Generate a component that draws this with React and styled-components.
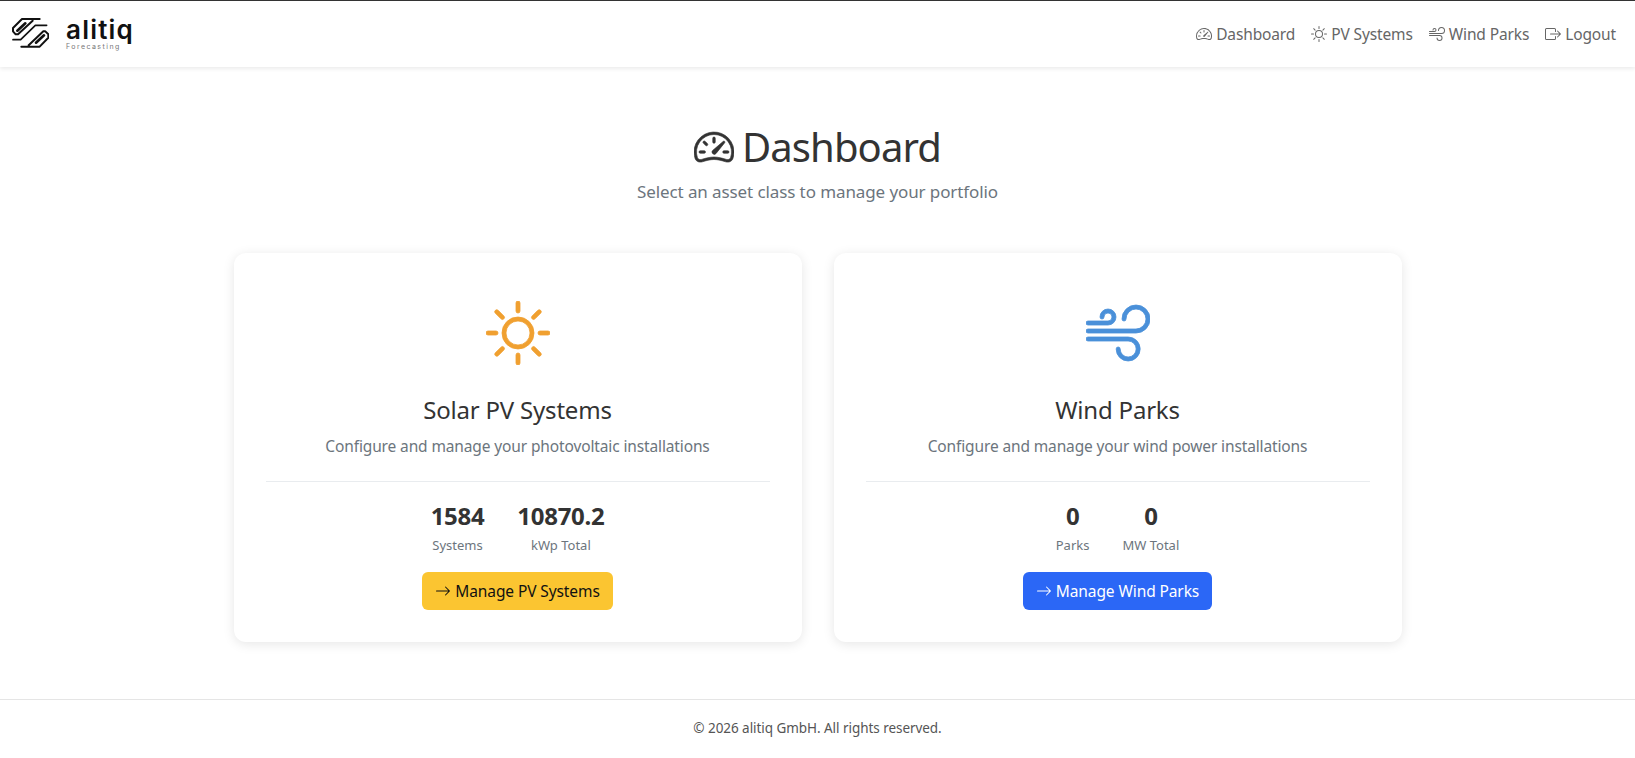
import React from "react";
import styled, { createGlobalStyle } from "styled-components";
import {
  BsSpeedometer2,
  BsSun,
  BsWind,
  BsBoxArrowRight,
  BsArrowRight,
} from "react-icons/bs";

const GlobalStyle = createGlobalStyle`
  * { box-sizing: border-box; }
  html, body { margin: 0; padding: 0; background: #fff; }
  body {
    font-family: "Noto Sans", "Open Sans", sans-serif;
    color: #333;
  }
`;

const Page = styled.div`
  min-height: 758px;
  display: flex;
  flex-direction: column;
  overflow: hidden;
`;

const Navbar = styled.nav`
  height: 67px;
  border-top: 1px solid #333;
  background: #fff;
  box-shadow: 0 2px 4px rgba(0, 0, 0, 0.08);
  display: flex;
  align-items: center;
  justify-content: space-between;
  padding: 0 19px 0 12px;
`;

const Brand = styled.div`
  display: flex;
  align-items: center;
  gap: 17px;
`;

const LogoMark = styled.svg`
  width: 37px;
  height: 30px;
  margin-bottom: 3px;
`;

const BrandText = styled.div`
  display: flex;
  flex-direction: column;
`;

const BrandName = styled.span`
  font-family: "Inter", sans-serif;
  font-weight: 600;
  font-size: 26px;
  line-height: 26px;
  letter-spacing: 1.2px;
  color: #111;
`;

const BrandSub = styled.span`
  font-family: "Inter", sans-serif;
  font-size: 7px;
  line-height: 8px;
  letter-spacing: 1.45px;
  color: #777;
`;

const NavLinks = styled.div`
  display: flex;
  align-items: center;
  gap: 16px;
`;

const NavLink = styled.a`
  display: flex;
  align-items: center;
  gap: 4px;
  font-size: 15.5px;
  letter-spacing: -0.13px;
  color: #666;
  text-decoration: none;
`;

const Main = styled.main`
  flex: 1;
  display: flex;
  flex-direction: column;
  align-items: center;
  padding-top: 56px;
`;

const Title = styled.h1`
  margin: 0;
  display: flex;
  align-items: center;
  gap: 8px;
  font-size: 40px;
  font-weight: 400;
  line-height: 48px;
  letter-spacing: -0.9px;
  color: #333;

  svg {
    stroke: currentColor;
    stroke-width: 0.25;
  }
`;

const Subtitle = styled.p`
  margin: 8px 0 0;
  font-size: 17px;
  line-height: 26px;
  letter-spacing: -0.1px;
  color: #6c757d;
`;

const CardRow = styled.div`
  margin-top: 48px;
  display: grid;
  grid-template-columns: 568px 568px;
  gap: 32px;
`;

const Card = styled.section`
  background: #fff;
  border-radius: 12px;
  box-shadow: 0 2px 12px rgba(0, 0, 0, 0.1);
  padding: 32px;
  display: flex;
  flex-direction: column;
  align-items: center;
  text-align: center;
`;

const CardIcon = styled.div`
  font-size: 64px;
  line-height: 0;
  margin-top: 16px;
  color: ${(p) => p.$color};

  svg {
    stroke: currentColor;
    stroke-width: 0.2;
  }
`;

const CardTitle = styled.h2`
  margin: 30px 0 0;
  font-size: 24px;
  font-weight: 400;
  line-height: 29px;
  letter-spacing: -0.2px;
  color: #333;
`;

const CardText = styled.p`
  margin: 10px 0 0;
  font-size: 15.5px;
  line-height: 24px;
  letter-spacing: -0.13px;
  color: #6c757d;
`;

const Divider = styled.hr`
  width: 100%;
  margin: 23px 0 0;
  border: 0;
  border-top: 1px solid #e9ecef;
`;

const Stats = styled.div`
  margin-top: 19px;
  display: flex;
  justify-content: center;
  gap: 33px;
`;

const Stat = styled.div`
  display: flex;
  flex-direction: column;
  align-items: center;
`;

const StatValue = styled.span`
  font-size: 24px;
  font-weight: 700;
  line-height: 29px;
  letter-spacing: -0.3px;
  color: #333;
`;

const StatLabel = styled.span`
  margin-top: 5px;
  font-size: 13px;
  line-height: 20px;
  color: #6c757d;
`;

const ManageButton = styled.a`
  margin-top: 17px;
  display: inline-flex;
  align-items: center;
  gap: 4px;
  height: 38px;
  padding: 0 13px;
  border-radius: 6px;
  font-size: 15.5px;
  letter-spacing: -0.1px;
  text-decoration: none;
  color: ${(p) => p.$text};
  background: ${(p) => p.$bg};
`;

const Footer = styled.footer`
  height: 59px;
  border-top: 1px solid #e5e5e5;
  display: flex;
  justify-content: center;
  padding-top: 18px;
  font-size: 13.5px;
  line-height: 20px;
  letter-spacing: -0.05px;
  color: #555;
`;

const Logo = () => (
  <LogoMark
    viewBox="22 28 111 90"
    fill="none"
    stroke="#111"
    strokeWidth="6"
    strokeLinecap="round"
    strokeLinejoin="round"
  >
    <path d="M105 31 H52 L25 58 V68 L33 77 H40 L84 36" />
    <path d="M38 66 L62 44" strokeWidth="8" />
    <path d="M25 93 H48 L92 50 H126" strokeWidth="5" />
    <path d="M50 114 H105 L131 87 V77 L122 68 H116 L72 110" />
    <path d="M118 80 L94 102" strokeWidth="8" />
  </LogoMark>
);

const navItems = [
  { label: "Dashboard", Icon: BsSpeedometer2 },
  { label: "PV Systems", Icon: BsSun },
  { label: "Wind Parks", Icon: BsWind },
  { label: "Logout", Icon: BsBoxArrowRight },
];

const cards = [
  {
    title: "Solar PV Systems",
    text: "Configure and manage your photovoltaic installations",
    Icon: BsSun,
    color: "#f0a030",
    stats: [
      { value: "1584", label: "Systems" },
      { value: "10870.2", label: "kWp Total" },
    ],
    button: "Manage PV Systems",
    bg: "#fbc531",
    fg: "#111",
  },
  {
    title: "Wind Parks",
    text: "Configure and manage your wind power installations",
    Icon: BsWind,
    color: "#4a90d9",
    stats: [
      { value: "0", label: "Parks" },
      { value: "0", label: "MW Total" },
    ],
    button: "Manage Wind Parks",
    bg: "#2b67f6",
    fg: "#fff",
  },
];

export default function App() {
  return (
    <Page>
      <GlobalStyle />
      <Navbar>
        <Brand>
          <Logo />
          <BrandText>
            <BrandName>alitiq</BrandName>
            <BrandSub>Forecasting</BrandSub>
          </BrandText>
        </Brand>
        <NavLinks>
          {navItems.map(({ label, Icon }) => (
            <NavLink key={label}>
              <Icon size={16} />
              {label}
            </NavLink>
          ))}
        </NavLinks>
      </Navbar>
      <Main>
        <Title>
          <BsSpeedometer2 size={40} />
          Dashboard
        </Title>
        <Subtitle>Select an asset class to manage your portfolio</Subtitle>
        <CardRow>
          {cards.map((c) => (
            <Card key={c.title}>
              <CardIcon $color={c.color}>
                <c.Icon />
              </CardIcon>
              <CardTitle>{c.title}</CardTitle>
              <CardText>{c.text}</CardText>
              <Divider />
              <Stats>
                {c.stats.map((s) => (
                  <Stat key={s.label}>
                    <StatValue>{s.value}</StatValue>
                    <StatLabel>{s.label}</StatLabel>
                  </Stat>
                ))}
              </Stats>
              <ManageButton $bg={c.bg} $text={c.fg}>
                <BsArrowRight size={16} />
                {c.button}
              </ManageButton>
            </Card>
          ))}
        </CardRow>
      </Main>
      <Footer>© 2026 alitiq GmbH. All rights reserved.</Footer>
    </Page>
  );
}
